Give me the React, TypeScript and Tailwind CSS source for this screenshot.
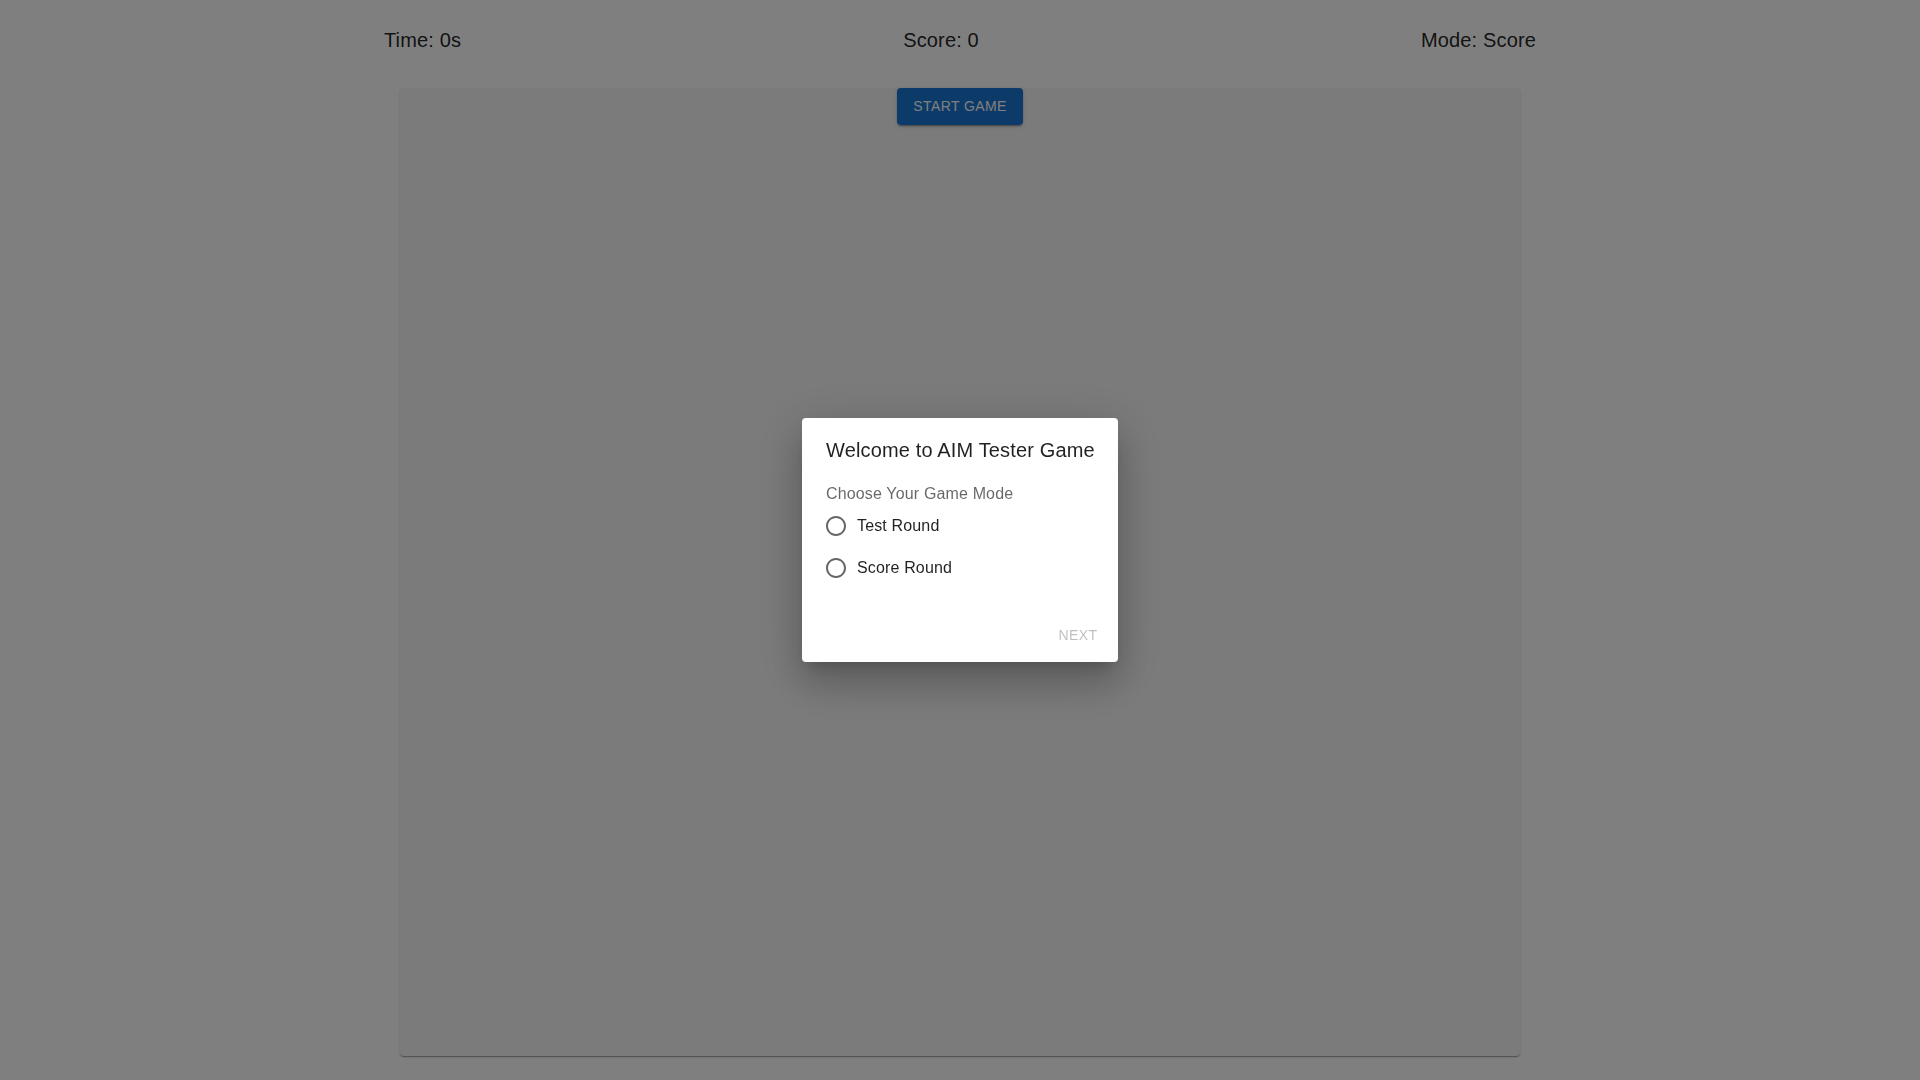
import React from "react";

function RadioIcon() {
  return (
    <svg viewBox="0 0 24 24" className="w-6 h-6" aria-hidden="true">
      <path
        fill="rgba(0,0,0,0.6)"
        d="M12 2C6.48 2 2 6.48 2 12s4.48 10 10 10 10-4.48 10-10S17.52 2 12 2zm0 18c-4.42 0-8-3.58-8-8s3.58-8 8-8 8 3.58 8 8-3.58 8-8 8z"
      />
    </svg>
  );
}

function RadioRow({ label }: { label: string }) {
  return (
    <label className="flex items-center h-[42px] -ml-[11px] cursor-pointer">
      <span className="w-[42px] h-[42px] flex items-center justify-center">
        <RadioIcon />
      </span>
      <span className="text-base leading-6 tracking-[0.15px] text-[rgba(0,0,0,0.87)]">{label}</span>
    </label>
  );
}

export default function App() {
  return (
    <div className="min-h-screen w-full bg-white font-['Liberation_Sans',Arial,sans-serif] relative">
      <div className="w-[1152px] mx-auto pt-6">
        <div className="flex justify-between h-8 items-center text-[20px] leading-8 tracking-[0.15px] text-[rgba(0,0,0,0.87)]">
          <span>Time: 0s</span>
          <span>Score: 0</span>
          <span>Mode: Score</span>
        </div>
      </div>
      <div className="w-[1120px] h-[968px] mx-auto mt-8 bg-[#f6f6f6] rounded shadow-[0px_2px_1px_-1px_rgba(0,0,0,0.2),0px_1px_1px_0px_rgba(0,0,0,0.14),0px_1px_3px_0px_rgba(0,0,0,0.12)] flex justify-center items-start">
        <button className="bg-[#1976d2] text-white text-sm font-medium uppercase tracking-[0.4px] leading-[24.5px] px-4 py-[6px] rounded shadow-[0px_3px_1px_-2px_rgba(0,0,0,0.2),0px_2px_2px_0px_rgba(0,0,0,0.14),0px_1px_5px_0px_rgba(0,0,0,0.12)]">
          Start Game
        </button>
      </div>
      <div className="h-6" />

      <div className="fixed inset-0 bg-black/50 flex items-center justify-center">
        <div className="w-[316px] bg-white rounded shadow-[0px_11px_15px_-7px_rgba(0,0,0,0.2),0px_24px_38px_3px_rgba(0,0,0,0.14),0px_9px_46px_8px_rgba(0,0,0,0.12)]">
          <h2 className="px-6 py-4 text-[20px] leading-8 font-medium tracking-[0.15px] text-[rgba(0,0,0,0.87)] whitespace-nowrap">
            Welcome to AIM Tester Game
          </h2>
          <div className="px-6 pb-5">
            <div className="text-base leading-[23px] tracking-[0.15px] text-[rgba(0,0,0,0.6)]">
              Choose Your Game Mode
            </div>
            <div className="flex flex-col">
              <RadioRow label="Test Round" />
              <RadioRow label="Score Round" />
            </div>
          </div>
          <div className="p-2 flex justify-end">
            <button
              disabled
              className="min-w-16 px-2 py-[6px] text-sm leading-[24.5px] font-medium uppercase tracking-[0.4px] text-[rgba(0,0,0,0.26)] rounded"
            >
              Next
            </button>
          </div>
        </div>
      </div>
    </div>
  );
}
